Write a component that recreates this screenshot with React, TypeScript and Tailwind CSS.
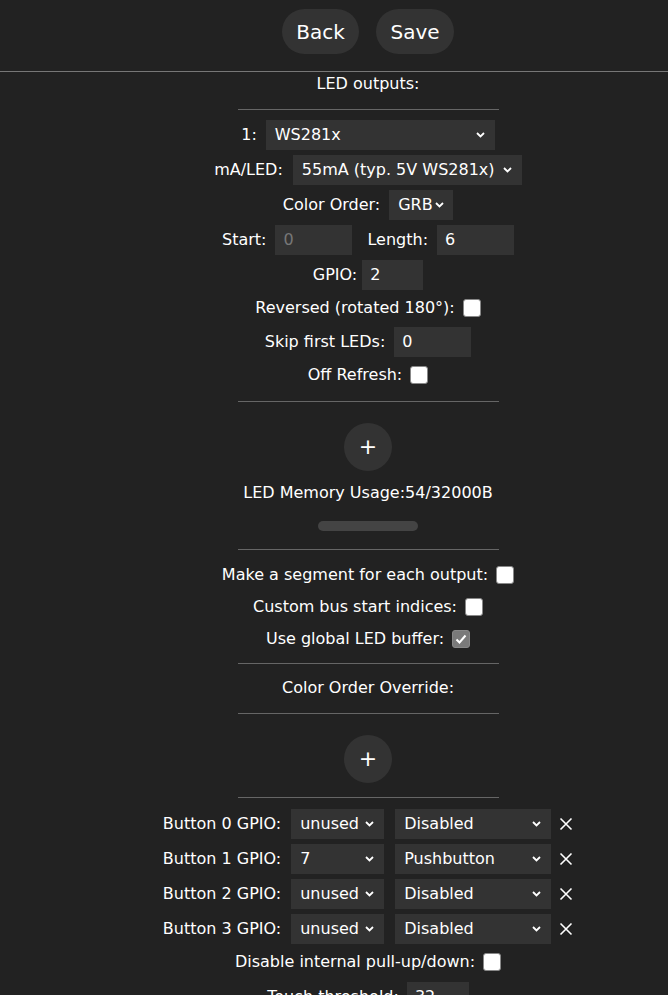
import React from "react";

function Chevron() {
  return (
    <svg width="9" height="6" viewBox="0 0 9 6" className="shrink-0">
      <polyline points="1,1 4.5,4.5 8,1" fill="none" stroke="white" strokeWidth="1.8" />
    </svg>
  );
}

function Select({ value, className }: { value: string; className: string }) {
  return (
    <div className={"h-[30px] bg-[#333] flex items-center justify-between pl-[9px] pr-[10px] whitespace-nowrap " + className}>
      <span>{value}</span>
      <Chevron />
    </div>
  );
}

function Input({ value, className, dim }: { value: string; className: string; dim?: boolean }) {
  return (
    <div className={"h-[30px] bg-[#333] flex items-center pl-[8px] " + (dim ? "text-[#777] " : "") + className}>
      {value}
    </div>
  );
}

function Check({ checked }: { checked?: boolean }) {
  return (
    <div
      className={
        "w-[18px] h-[18px] rounded-[3px] border border-[#888] flex items-center justify-center " +
        (checked ? "bg-[#7a7a7a]" : "bg-white")
      }
    >
      {checked && (
        <svg width="12" height="10" viewBox="0 0 12 10">
          <polyline points="1.5,5.5 4.5,8.5 10.5,1.5" fill="none" stroke="white" strokeWidth="2" />
        </svg>
      )}
    </div>
  );
}

function Hr({ className }: { className: string }) {
  return <div className={"w-[261px] h-px bg-[#666] " + className} />;
}

function Plus({ className }: { className: string }) {
  return (
    <div className={"w-[48px] h-[48px] rounded-full bg-[#333] flex items-center justify-center text-[22px] " + className}>
      +
    </div>
  );
}

function Cross() {
  return (
    <svg width="14" height="14" viewBox="0 0 14 14" className="ml-[8px]">
      <path d="M1.5 1.5 L12.5 12.5 M12.5 1.5 L1.5 12.5" stroke="white" strokeWidth="1.6" />
    </svg>
  );
}

function ButtonRow({ n, gpio, type, className }: { n: number; gpio: string; type: string; className: string }) {
  return (
    <div className={"flex items-center h-[30px] " + className}>
      <span className="mr-[10px]">Button {n} GPIO:</span>
      <Select value={gpio} className="w-[93px]" />
      <Select value={type} className="w-[156px] ml-[11px]" />
      <Cross />
    </div>
  );
}

export default function App() {
  return (
    <div className="min-h-screen bg-[#222] text-white font-['DejaVu_Sans',sans-serif] text-[16px] leading-[20px] overflow-hidden">
      <div className="h-[72px] border-b border-[#777] flex justify-center pl-[68px] pt-[9px] gap-[17px]">
        <div className="h-[45px] w-[77px] rounded-full bg-[#333] flex items-center justify-center text-[20px]">Back</div>
        <div className="h-[45px] w-[78px] rounded-full bg-[#333] flex items-center justify-center text-[20px]">Save</div>
      </div>
      <div className="flex flex-col items-center pl-[68px]">
        <div className="mt-[2px]">LED outputs:</div>
        <Hr className="mt-[15px]" />
        <div className="flex items-center mt-[10px]">
          <span className="mr-[9px]">1:</span>
          <Select value="WS281x" className="w-[229px]" />
        </div>
        <div className="flex items-center mt-[5px]">
          <span className="mr-[10px]">mA/LED:</span>
          <Select value="55mA (typ. 5V WS281x)" className="w-[229px] pr-[10px] gap-[4px]" />
        </div>
        <div className="flex items-center mt-[5px]">
          <span className="mr-[9px]">Color Order:</span>
          <Select value="GRB" className="w-[64px] !pr-[9px]" />
        </div>
        <div className="flex items-center mt-[5px]">
          <span className="mr-[9px]">Start:</span>
          <Input value="0" dim className="w-[77px]" />
          <span className="ml-[15px] mr-[9px]">Length:</span>
          <Input value="6" className="w-[77px]" />
        </div>
        <div className="flex items-center mt-[5px]">
          <span className="mr-[5px]">GPIO:</span>
          <Input value="2" className="w-[61px]" />
        </div>
        <div className="flex items-center h-[30px] mt-[3px]">
          <span className="mr-[8px]">Reversed (rotated 180°):</span>
          <Check />
        </div>
        <div className="flex items-center mt-[4px]">
          <span className="mr-[9px]">Skip first LEDs:</span>
          <Input value="0" className="w-[77px]" />
        </div>
        <div className="flex items-center h-[30px] mt-[3px]">
          <span className="mr-[8px]">Off Refresh:</span>
          <Check />
        </div>
        <Hr className="mt-[11px]" />
        <Plus className="mt-[21px]" />
        <div className="mt-[12px]">LED Memory Usage:54/32000B</div>
        <div className="w-[100px] h-[10px] rounded-full bg-[#444] mt-[18px]" />
        <Hr className="mt-[18px]" />
        <div className="flex items-center h-[30px] mt-[10px]">
          <span className="mr-[8px]">Make a segment for each output:</span>
          <Check />
        </div>
        <div className="flex items-center h-[30px] mt-[2px]">
          <span className="mr-[8px]">Custom bus start indices:</span>
          <Check />
        </div>
        <div className="flex items-center h-[30px] mt-[2px]">
          <span className="mr-[8px]">Use global LED buffer:</span>
          <Check checked />
        </div>
        <Hr className="mt-[9px]" />
        <div className="mt-[14px]">Color Order Override:</div>
        <Hr className="mt-[15px]" />
        <Plus className="mt-[21px]" />
        <Hr className="mt-[14px]" />
        <ButtonRow n={0} gpio="unused" type="Disabled" className="mt-[11px]" />
        <ButtonRow n={1} gpio="7" type="Pushbutton" className="mt-[5px]" />
        <ButtonRow n={2} gpio="unused" type="Disabled" className="mt-[5px]" />
        <ButtonRow n={3} gpio="unused" type="Disabled" className="mt-[5px]" />
        <div className="flex items-center h-[30px] mt-[3px]">
          <span className="mr-[8px]">Disable internal pull-up/down:</span>
          <Check />
        </div>
        <div className="flex items-center mt-[5px]">
          <span className="mr-[8px]">Touch threshold:</span>
          <Input value="32" className="w-[62px]" />
        </div>
      </div>
    </div>
  );
}
